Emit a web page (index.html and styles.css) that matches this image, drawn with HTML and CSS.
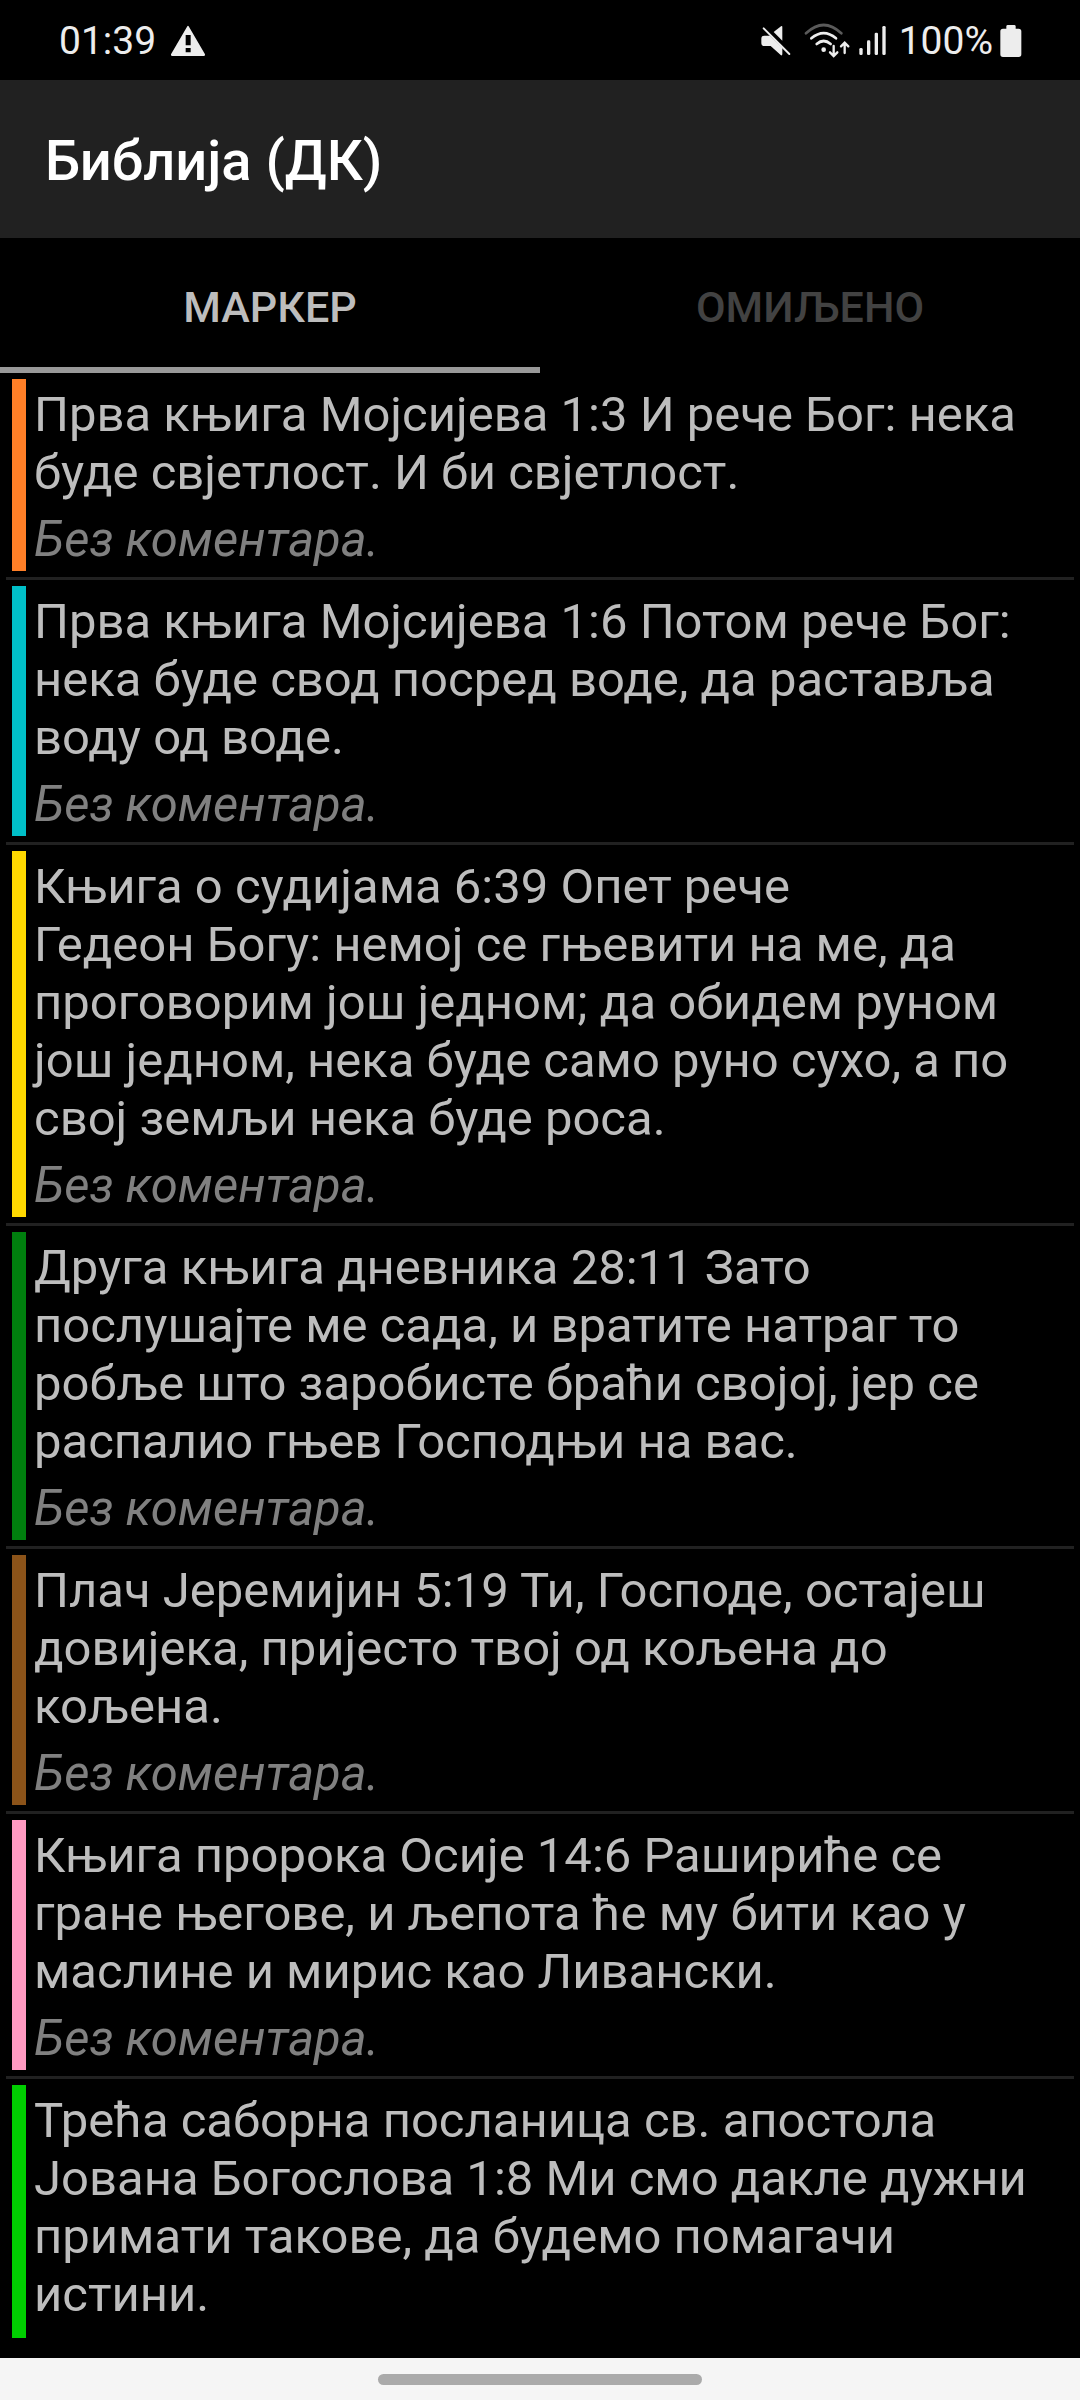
FILE: index.html
```html
<!DOCTYPE html>
<html lang="sr">
<head>
<meta charset="utf-8">
<meta name="viewport" content="width=device-width, initial-scale=1">
<title>Библија (ДК)</title>
<link rel="stylesheet" href="styles.css">
</head>
<body>
<div class="status">
  <div class="status-group">
    <span>01:39</span>
    <svg class="icon-warning" width="36" height="32" viewBox="507 75 108 96" aria-hidden="true">
      <path fill="#ededed" fill-rule="evenodd" d="M559 79q2-3 4 0L612 163q1 5-3 5H513q-4 0-3-5ZM554 105v31h15v-31ZM554 144v13h15v-13Z"/>
    </svg>
  </div>
  <div class="status-group status-right">
    <svg class="icon-mute" width="30" height="32" viewBox="60 75 90 96" aria-hidden="true">
      <g fill="#ededed">
        <path d="M98 96L120 79q4-2 4 2V122Z"/>
        <path d="M70 107H87L124 143V163q-1 5-5 2L89 138H70Q61 138 61 129V116Q61 107 70 107Z"/>
      </g>
      <path d="M71 79L152 160" stroke="#000" stroke-width="7"/>
      <path d="M68 85L145 162" stroke="#ededed" stroke-width="6" stroke-linecap="round"/>
    </svg>
    <svg class="icon-wifi" width="46" height="36" viewBox="189 69 138 108" fill="none" stroke="#ededed" stroke-width="8" stroke-linecap="round" aria-hidden="true">
      <path stroke="#5a5a5a" d="M195 100Q248 50 301 100"/>
      <path d="M211 115Q248 84 285 115"/>
      <path d="M227 132Q248 114 269 132"/>
      <circle cx="248" cy="149" r="7" fill="#ededed" stroke="none"/>
      <path stroke-width="7" d="M278 138V167M267 157L278 168L289 157M311 159V129M300 139L311 128L322 139"/>
    </svg>
    <svg class="icon-signal" width="28" height="32" viewBox="354 75 84 96" fill="#ededed" aria-hidden="true">
      <rect x="355" y="144" width="10" height="21" rx="4"/>
      <rect x="378" y="121" width="10" height="44" rx="4"/>
      <rect x="401" y="98" width="10" height="67" rx="4"/>
      <rect x="424" y="78" width="10" height="87" rx="4"/>
    </svg>
    <span>100%</span>
    <svg class="icon-battery" width="22" height="32" viewBox="779 75 66 96" fill="#ededed" aria-hidden="true">
      <path d="M798 78q1-3 4-3h20q3 0 4 3v8h9q8 0 8 8v69q0 8-8 8h-47q-8 0-8-8V94q0-8 8-8h10Z"/>
    </svg>
  </div>
</div>

<header class="appbar"><h1 class="title">Библија (ДК)</h1></header>

<div class="tabs" role="tablist">
  <button class="tab tab-active" type="button" role="tab" aria-selected="true">МАРКЕР</button>
  <button class="tab" type="button" role="tab" aria-selected="false">ОМИЉЕНО</button>
</div>

<main class="list">
  <article class="item orange">
    <p class="verse">Прва књига Мојсијева 1:3 И рече Бог: нека буде свјетлост. И би свјетлост.</p>
    <p class="comment">Без коментара.</p>
  </article>
  <article class="item cyan">
    <p class="verse">Прва књига Мојсијева 1:6 Потом рече Бог: нека буде свод посред воде, да раставља воду од воде.</p>
    <p class="comment">Без коментара.</p>
  </article>
  <article class="item yellow">
    <p class="verse">Књига о судијама 6:39 Опет рече<br>Гедеон Богу: немој се гњевити на ме, да проговорим још једном; да обидем руном још једном, нека буде само руно сухо, а по свој земљи нека буде роса.</p>
    <p class="comment">Без коментара.</p>
  </article>
  <article class="item green">
    <p class="verse">Друга књига дневника 28:11 Зато послушајте ме сада, и вратите натраг то робље што заробисте браћи својој, јер се распалио гњев Господњи на вас.</p>
    <p class="comment">Без коментара.</p>
  </article>
  <article class="item brown">
    <p class="verse">Плач Јеремијин 5:19 Ти, Господе, остајеш довијека, пријесто твој од кољена до кољена.</p>
    <p class="comment">Без коментара.</p>
  </article>
  <article class="item pink">
    <p class="verse">Књига пророка Осије 14:6 Рашириће се гране његове, и љепота ће му бити као у маслине и мирис као Ливански.</p>
    <p class="comment">Без коментара.</p>
  </article>
  <article class="item lime">
    <p class="verse">Трећа саборна посланица св. апостола Јована Богослова 1:8 Ми смо дакле дужни примати такове, да будемо помагачи истини.</p>
  </article>
</main>

<footer class="navbar"><div class="handle"></div></footer>
</body>
</html>
```
FILE: styles.css
```css
* {
  box-sizing: border-box;
}

body {
  margin: 0;
  min-height: 100vh;
  display: flex;
  flex-direction: column;
  background: #000;
  color: #bdbdbd;
  font-family: Roboto, "Noto Sans", sans-serif;
}

.status {
  padding: 18px 58px 16px 59px;
  display: flex;
  align-items: center;
  justify-content: space-between;
  color: #ededed;
  font-size: 39px;
  line-height: 46px;
}

.status-group {
  display: flex;
  align-items: center;
}

.icon-warning {
  margin-left: 14px;
}

.icon-wifi {
  margin-left: 13px;
}

.icon-signal {
  margin: 0 12px 0 9px;
}

.icon-battery {
  margin-left: 7px;
}

.appbar {
  padding: 49px 45px 45px;
  background: #212121;
}

.title {
  margin: 0;
  color: #fff;
  font-size: 56px;
  font-weight: 500;
  line-height: 64px;
}

.tabs {
  display: flex;
}

.tab {
  flex: 1;
  padding: 45px 0 36px;
  border: 0;
  border-bottom: 6px solid transparent;
  background: none;
  color: #424242;
  font-family: inherit;
  font-size: 43px;
  font-weight: 500;
  line-height: 48px;
}

.tab-active {
  border-bottom-color: #999;
  color: #bdbdbd;
}

.list {
  padding: 0 6px 14px;
}

.item {
  padding: 6px;
}

.item + .item {
  border-top: 3px solid #212121;
}

.verse,
.comment {
  margin: 0;
  padding: 7px 20px 0 8px;
  border-left: 14px solid;
  color: #bdbdbd;
  font-size: 49px;
  line-height: 58px;
}

.comment {
  padding-top: 9px;
  padding-bottom: 2px;
  color: #808080;
  font-style: italic;
}

.verse:last-child {
  padding-bottom: 14px;
}

.orange > p { border-left-color: #ff7f27; }
.cyan > p { border-left-color: #00bfc8; }
.yellow > p { border-left-color: #ffd800; }
.green > p { border-left-color: #007f0e; }
.brown > p { border-left-color: #8b5319; }
.pink > p { border-left-color: #ff99c1; }
.lime > p { border-left-color: #00ce00; }

.navbar {
  margin-top: auto;
  padding: 16px 0 15px;
  background: #f5f5f5;
}

.handle {
  width: 30%;
  height: 11px;
  margin: 0 auto;
  border-radius: 6px;
  background: #aaa;
}
```
